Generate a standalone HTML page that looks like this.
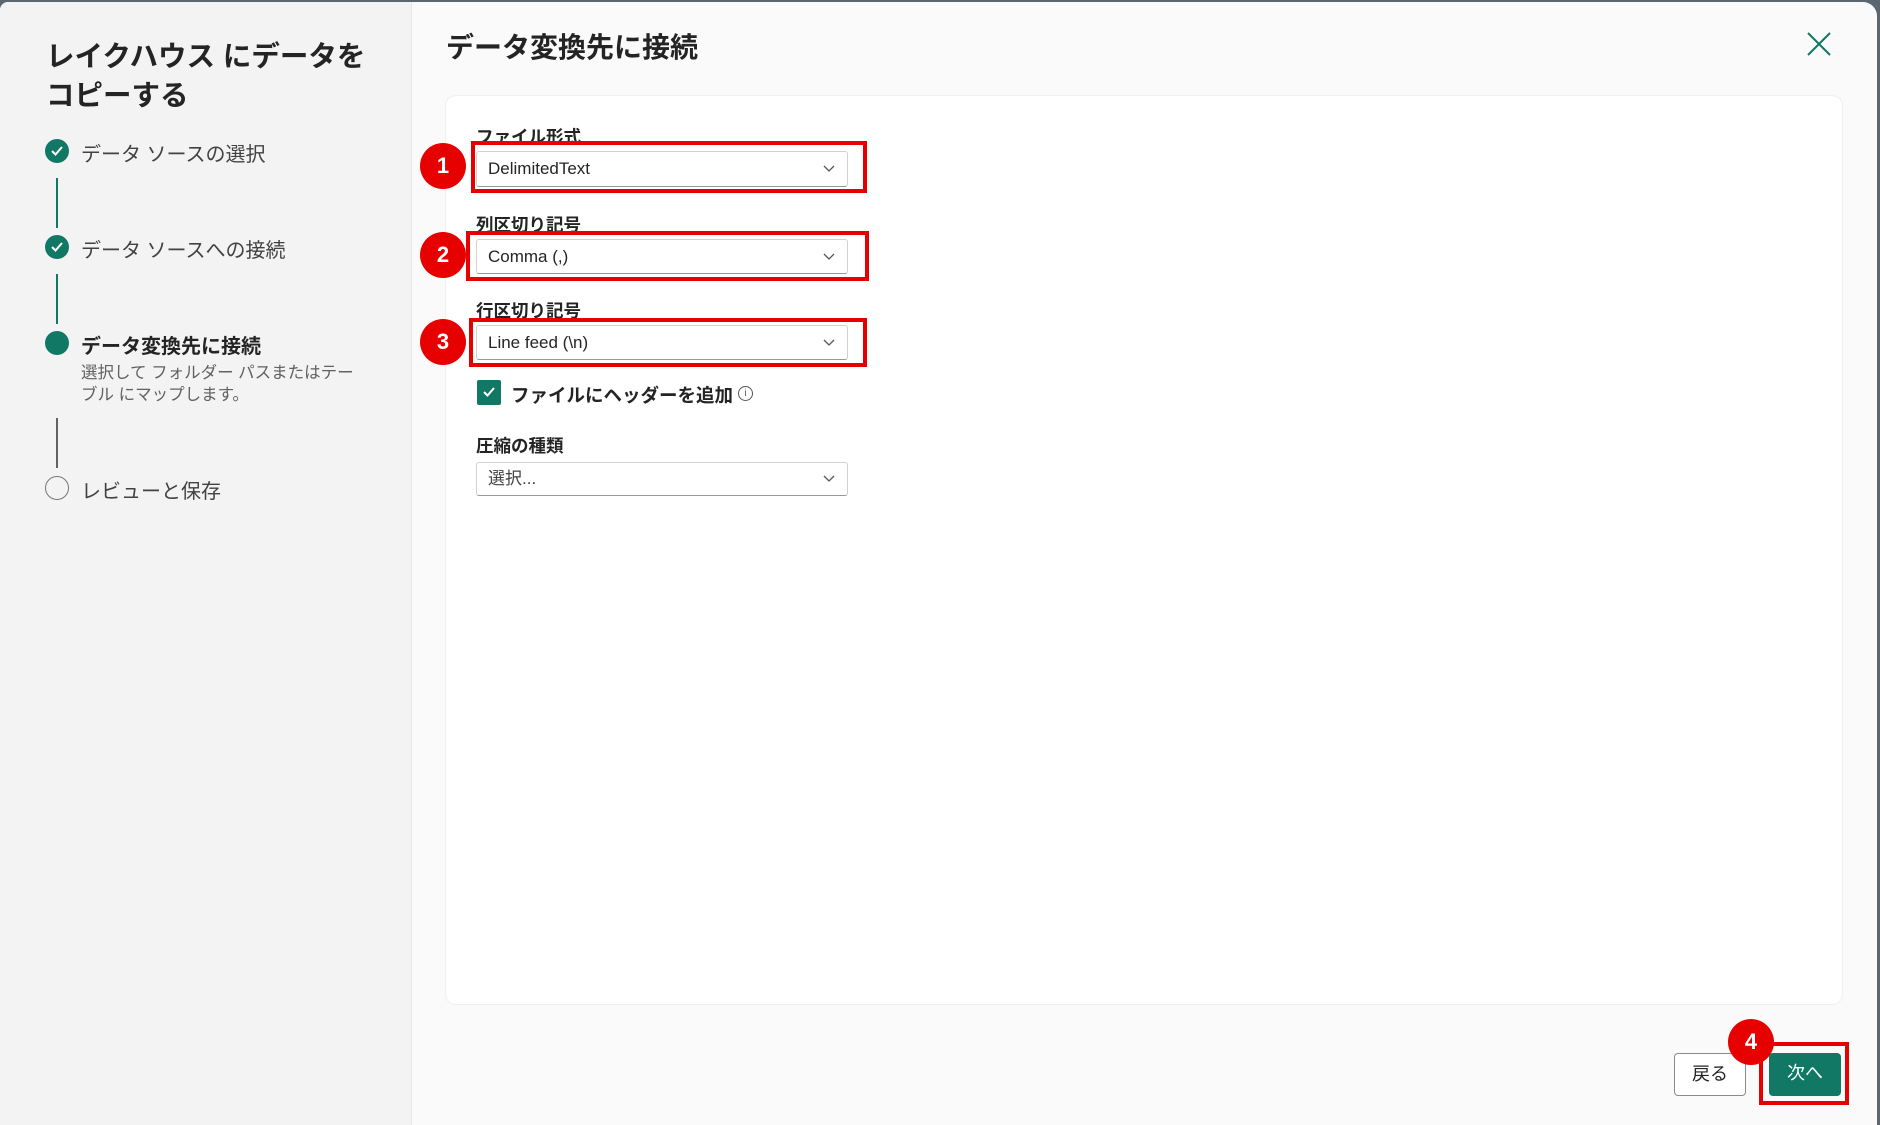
<!DOCTYPE html>
<html><head><meta charset="utf-8"><style>
*{box-sizing:border-box;margin:0;padding:0}
body{width:1880px;height:1125px;position:relative;overflow:hidden;background:#5a6670;font-family:"Segoe UI","Liberation Sans","Noto Sans CJK JP",sans-serif;color:#242424}
.dlg{position:absolute;left:0;top:2px;width:1877px;height:1123px;background:#fafafa;border-radius:8px 14px 0 0;overflow:hidden}
.left{position:absolute;left:0;top:0;width:412px;height:100%;background:#f3f3f3;border-right:1px solid #e6e6e6}
.abs{position:absolute;white-space:nowrap}
.h1{left:46px;font-size:28.5px;font-weight:bold;line-height:40px}
.step{left:81px;font-size:20px;color:#424242}
.circ{position:absolute;width:24px;height:24px;border-radius:50%;left:45px;background:#117865}
.circ svg{position:absolute;left:5px;top:6px}
.vl{position:absolute;left:56px;width:2px;background:#117865}
.card{position:absolute;left:446px;top:94px;width:1396px;height:908px;background:#fff;border-radius:10px;box-shadow:0 0 2px rgba(0,0,0,.12)}
.lbl{left:476px;font-size:17.5px;font-weight:bold}
.dd{position:absolute;left:476px;width:372px;background:#fff;border:1px solid #d1d1d1;border-bottom-color:#999;border-radius:3px;font-size:17px;padding-left:11px}
.dd svg{position:absolute;right:12px;top:50%;margin-top:-4px}
.red{position:absolute;border:4px solid #e60000}
.badge{position:absolute;width:46px;height:46px;border-radius:50%;background:#e60000;color:#fff;font-weight:bold;font-size:22px;text-align:center;line-height:46px;font-family:"Liberation Sans",sans-serif}
.btn{position:absolute;top:1051px;height:43px;width:72px;border-radius:4px;font-size:18px;text-align:center;line-height:41px}
</style></head><body>
<div class="dlg">
<div class="left">
<div class="abs h1" style="top:35px">レイクハウス にデータを</div>
<div class="abs h1" style="top:74px">コピーする</div>
<div class="circ" style="top:137px"><svg width="14" height="12" viewBox="0 0 14 12"><path d="M2 6l3.5 3.5L12 2" stroke="#fff" stroke-width="2" fill="none"/></svg></div>
<div class="abs step" style="top:136px">データ ソースの選択</div>
<div class="vl" style="top:176px;height:50px"></div>
<div class="circ" style="top:233px"><svg width="14" height="12" viewBox="0 0 14 12"><path d="M2 6l3.5 3.5L12 2" stroke="#fff" stroke-width="2" fill="none"/></svg></div>
<div class="abs step" style="top:232px">データ ソースへの接続</div>
<div class="vl" style="top:272px;height:50px"></div>
<div class="circ" style="top:329px"></div>
<div class="abs step" style="top:328px;font-weight:bold;color:#242424">データ変換先に接続</div>
<div class="abs" style="left:81px;top:360px;font-size:16.5px;color:#616161;line-height:22px">選択して フォルダー パスまたはテー<br>ブル にマップします。</div>
<div class="vl" style="top:416px;height:50px;background:#616161"></div>
<div class="circ" style="top:474px;background:none;border:1.5px solid #777"></div>
<div class="abs step" style="top:473px">レビューと保存</div>
</div>
<div class="abs" style="left:446px;top:24px;font-size:28px;font-weight:bold">データ変換先に接続</div>
<svg style="position:absolute;left:1807px;top:30px" width="24" height="24" viewBox="0 0 24 24"><path d="M1 1L23 23M23 1L1 23" stroke="#117865" stroke-width="2"/></svg>
<div class="card"></div>
<div class="abs lbl" style="top:122px">ファイル形式</div>
<div class="dd" style="top:149px;height:36px;line-height:34px">DelimitedText<svg width="12" height="8" viewBox="0 0 12 8"><path d="M1 1l5 5 5-5" stroke="#555" stroke-width="1.3" fill="none"/></svg></div>
<div class="red" style="left:471px;top:139px;width:396px;height:52px"></div>
<div class="badge" style="left:420px;top:141px">1</div>
<div class="abs lbl" style="top:210px">列区切り記号</div>
<div class="dd" style="top:237px;height:35px;line-height:33px">Comma (,)<svg width="12" height="8" viewBox="0 0 12 8"><path d="M1 1l5 5 5-5" stroke="#555" stroke-width="1.3" fill="none"/></svg></div>
<div class="red" style="left:466px;top:229px;width:403px;height:50px"></div>
<div class="badge" style="left:420px;top:230px">2</div>
<div class="abs lbl" style="top:296px">行区切り記号</div>
<div class="dd" style="top:323px;height:35px;line-height:33px">Line feed (\n)<svg width="12" height="8" viewBox="0 0 12 8"><path d="M1 1l5 5 5-5" stroke="#555" stroke-width="1.3" fill="none"/></svg></div>
<div class="red" style="left:469px;top:316px;width:398px;height:49px"></div>
<div class="badge" style="left:420px;top:317px">3</div>
<div style="position:absolute;left:477px;top:378px;width:24px;height:25px;background:#117865;border-radius:2px"><svg style="position:absolute;left:5px;top:6px" width="14" height="12" viewBox="0 0 14 12"><path d="M2 6l3.5 3.5L12 2" stroke="#fff" stroke-width="2" fill="none"/></svg></div>
<div class="abs" style="left:511px;top:380px;font-size:18.5px;font-weight:bold">ファイルにヘッダーを追加</div>
<div style="position:absolute;left:738px;top:384px;width:15px;height:15px;border:1px solid #555;border-radius:50%;font-size:10px;text-align:center;line-height:13px;color:#555">i</div>
<div class="abs lbl" style="top:431px">圧縮の種類</div>
<div class="dd" style="top:460px;height:34px;line-height:32px;color:#424242">選択...<svg width="12" height="8" viewBox="0 0 12 8"><path d="M1 1l5 5 5-5" stroke="#555" stroke-width="1.3" fill="none"/></svg></div>
<div class="btn" style="left:1674px;background:#fff;border:1px solid #8a8a8a">戻る</div>
<div class="btn" style="left:1769px;background:#117865;color:#fff">次へ</div>
<div class="red" style="left:1759px;top:1040px;width:90px;height:63px"></div>
<div class="badge" style="left:1728px;top:1017px">4</div>
</div>
</body></html>
